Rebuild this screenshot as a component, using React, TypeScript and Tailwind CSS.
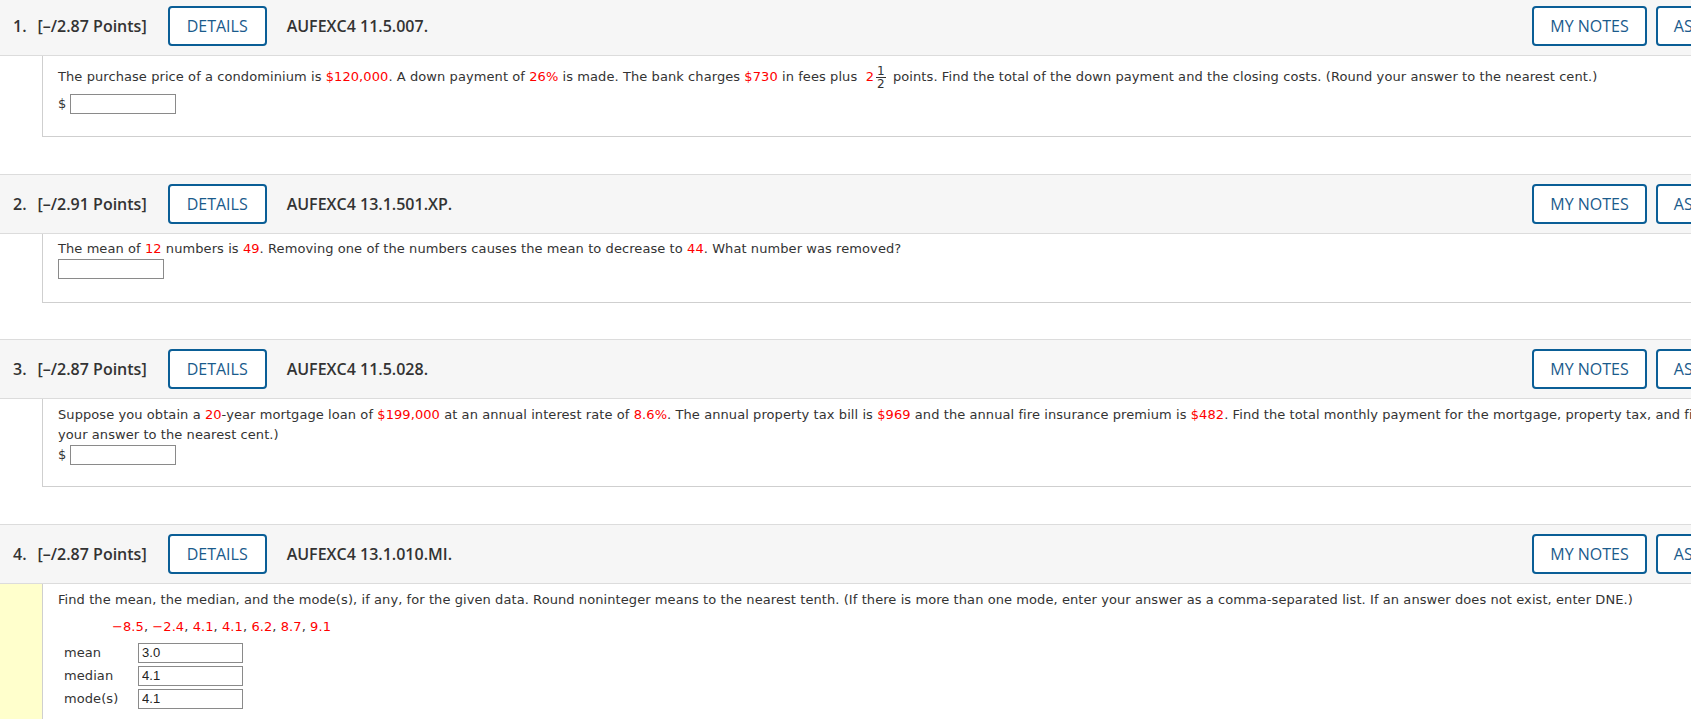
import React from 'react';

const R = ({ children }: { children: React.ReactNode }) => (
  <span className="text-[#ff0000]">{children}</span>
);

const QuestionHeader = ({ num, points, code }: { num: number; points: string; code: string }) => (
  <div className="flex items-center h-[60px] border-y border-[#dcdcdc] bg-[#f6f6f6] pl-[13px] pr-[60px] font-['Open_Sans',sans-serif] text-[16px] text-[#333]">
    <span className="font-semibold">{num}.</span>
    <span className="ml-[11px] font-semibold">[–/{points} Points]</span>
    <button className="ml-[21px] h-[40px] w-[99px] border-2 border-[#0a5e96] rounded-[4px] bg-white text-[#1a5b8c]">
      DETAILS
    </button>
    <span className="ml-[20px] font-semibold">{code}</span>
    <div className="flex-1" />
    <button className="h-[40px] w-[115px] border-2 border-[#0a5e96] rounded-[4px] bg-white text-[#1a5b8c]">
      MY NOTES
    </button>
    <button className="ml-[9px] h-[40px] w-[184px] border-2 border-[#0a5e96] rounded-[4px] bg-white text-[#1a5b8c] whitespace-nowrap">
      ASK YOUR TEACHER
    </button>
  </div>
);

const AnswerBox = ({ value, wide }: { value?: string; wide?: boolean }) => (
  <input
    readOnly
    value={value ?? ''}
    className={
      wide
        ? "w-[106px] h-[20px] border border-[#8a8a8a] bg-white px-[3px] font-['Liberation_Sans',Arial,sans-serif] text-[13px] text-[#222] outline-none"
        : "w-[105px] h-[20px] border border-[#8a8a8a] bg-white px-[3px] font-['Liberation_Sans',Arial,sans-serif] text-[13px] text-[#222] outline-none"
    }
  />
);

const Half = () => (
  <span className="inline-flex flex-col items-center align-middle -my-[6px] ml-[2px] mr-[3px] text-[12px] leading-[12px] text-[#333]">
    <span className="px-[1px] border-b border-[#333]">1</span>
    <span>2</span>
  </span>
);

const bodyText = "font-['DejaVu_Sans',Verdana,sans-serif] text-[13px] leading-[20px] tracking-[0.08px] text-[#333]";

export default function App() {
  return (
    <div className="w-full min-h-screen bg-white overflow-hidden">
      <div className="w-[1900px] -mt-[4px]">
        {/* Question 1 */}
        <section className="mb-[37px]">
          <QuestionHeader num={1} points="2.87" code="AUFEXC4 11.5.007." />
          <div className="flex">
            <div className="w-[42px] shrink-0" />
            <div className={`flex-1 border-l border-b border-[#cfcfcf] pl-[15px] pt-[11px] pb-[22px] ${bodyText}`}>
              <p>
                The purchase price of a condominium is <R>$120,000</R>. A down payment of <R>26%</R> is made. The bank
                charges <R>$730</R> in fees plus&nbsp; <R>2</R>
                <Half /> points. Find the total of the down payment and the closing costs. (Round your answer to the
                nearest cent.)
              </p>
              <div className="mt-[7px] flex items-center gap-[4px]">
                <span>$</span>
                <AnswerBox wide />
              </div>
            </div>
          </div>
        </section>

        {/* Question 2 */}
        <section className="mb-[36px]">
          <QuestionHeader num={2} points="2.91" code="AUFEXC4 13.1.501.XP." />
          <div className="flex">
            <div className="w-[42px] shrink-0" />
            <div className={`flex-1 border-l border-b border-[#cfcfcf] pl-[15px] pt-[5px] pb-[23px] ${bodyText}`}>
              <p>
                The mean of <R>12</R> numbers is <R>49</R>. Removing one of the numbers causes the mean to decrease to{' '}
                <R>44</R>. What number was removed?
              </p>
              <div className="flex items-center">
                <AnswerBox wide />
              </div>
            </div>
          </div>
        </section>

        {/* Question 3 */}
        <section className="mb-[37px]">
          <QuestionHeader num={3} points="2.87" code="AUFEXC4 11.5.028." />
          <div className="flex">
            <div className="w-[42px] shrink-0" />
            <div className={`flex-1 border-l border-b border-[#cfcfcf] pl-[15px] pt-[6px] pb-[21px] ${bodyText}`}>
              <p className="whitespace-nowrap">
                Suppose you obtain a <R>20</R>-year mortgage loan of <R>$199,000</R> at an annual interest rate of{' '}
                <R>8.6%</R>. The annual property tax bill is <R>$969</R> and the annual fire insurance premium is{' '}
                <R>$482</R>. Find the total monthly payment for the mortgage, property tax, and fire insurance. (Round
                <br />
                your answer to the nearest cent.)
              </p>
              <div className="flex items-center gap-[4px]">
                <span>$</span>
                <AnswerBox wide />
              </div>
            </div>
          </div>
        </section>

        {/* Question 4 */}
        <section>
          <QuestionHeader num={4} points="2.87" code="AUFEXC4 13.1.010.MI." />
          <div className="flex">
            <div className="w-[42px] shrink-0 bg-[#ffffcc]" />
            <div className={`flex-1 border-l border-b border-[#cfcfcf] pl-[15px] pt-[6px] pb-[24px] ${bodyText}`}>
              <p>
                Find the mean, the median, and the mode(s), if any, for the given data. Round noninteger means to the
                nearest tenth. (If there is more than one mode, enter your answer as a comma-separated list. If an answer
                does not exist, enter DNE.)
              </p>
              <p className="mt-[7px] pl-[54px]">
                <R>−8.5</R>, <R>−2.4</R>, <R>4.1</R>, <R>4.1</R>, <R>6.2</R>, <R>8.7</R>, <R>9.1</R>
              </p>
              <div className="mt-[6px] grid grid-cols-[80px_106px] gap-y-[3px] items-center">
                <span className="pl-[6px]">mean</span>
                <AnswerBox value="3.0" />
                <span className="pl-[6px]">median</span>
                <AnswerBox value="4.1" />
                <span className="pl-[6px]">mode(s)</span>
                <AnswerBox value="4.1" />
              </div>
            </div>
          </div>
        </section>
      </div>
    </div>
  );
}
